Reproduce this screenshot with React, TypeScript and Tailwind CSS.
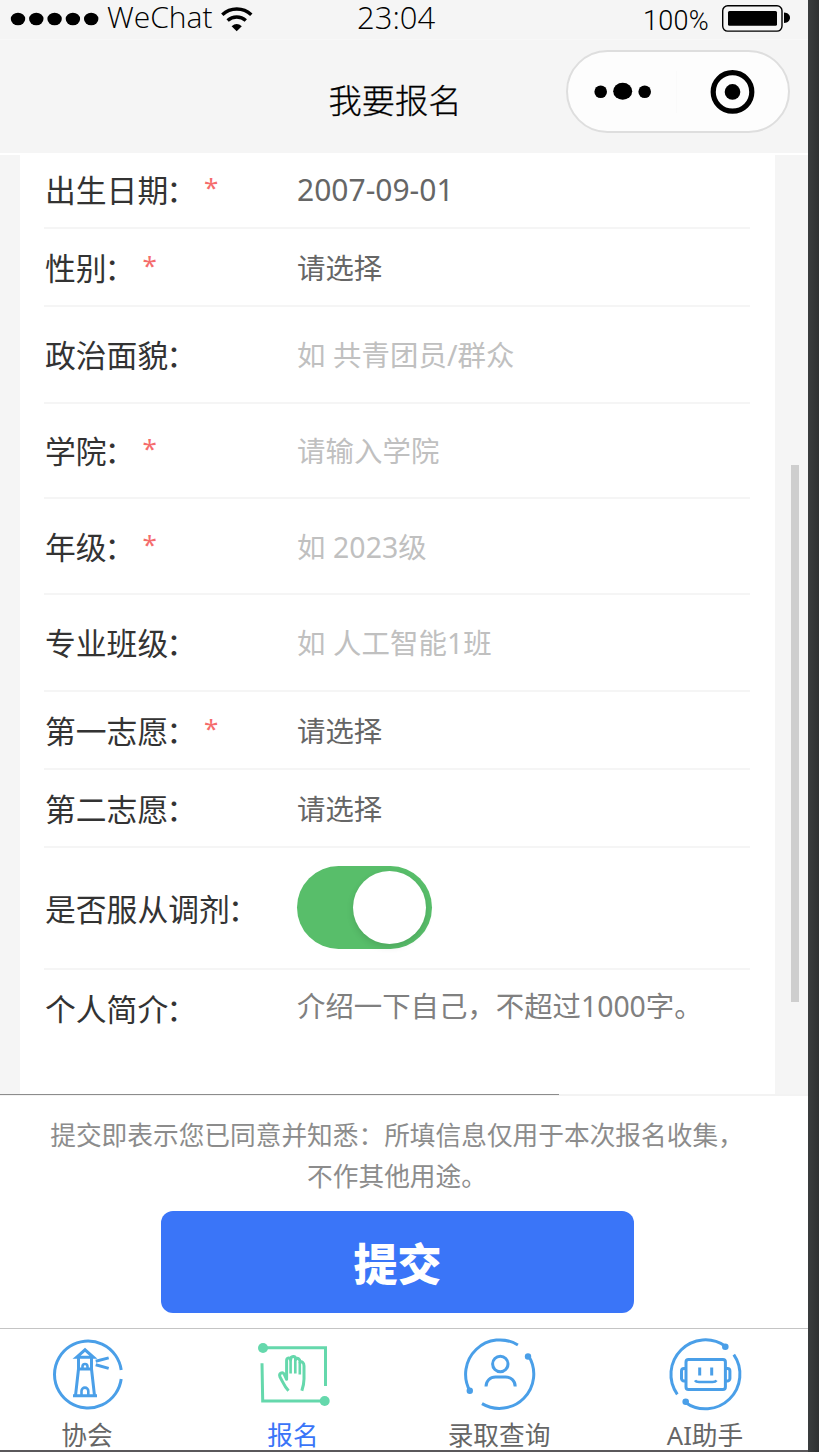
import { useState } from "react";
import type { ReactNode } from "react";

type Field = {
  label: string;
  required?: boolean;
  value: string;
  placeholder?: boolean;
  height: string;
};

const fields: Field[] = [
  { label: "出生日期", required: true, value: "2007-09-01", height: "h-[74px] pb-[3px]" },
  { label: "性别", required: true, value: "请选择", height: "h-[78px]" },
  { label: "政治面貌", value: "如 共青团员/群众", placeholder: true, height: "h-[97px]" },
  { label: "学院", required: true, value: "请输入学院", placeholder: true, height: "h-[95px]" },
  { label: "年级", required: true, value: "如 2023级", placeholder: true, height: "h-24" },
  { label: "专业班级", value: "如 人工智能1班", placeholder: true, height: "h-[97px]" },
  { label: "第一志愿", required: true, value: "请选择", height: "h-[78px]" },
  { label: "第二志愿", value: "请选择", height: "h-[78px]" },
];

function StatusBar() {
  return (
    <div className="relative flex h-10 items-start border-b border-[#f8f8f8] font-['Open_Sans'] font-light text-black">
      <svg width="90" height="38" viewBox="0 0 90 38" className="ml-[10px]">
        {[8, 26.3, 44.6, 62.9, 81.2].map((x) => (
          <ellipse key={x} cx={x} cy="19" rx="7.2" ry="6.3" />
        ))}
      </svg>
      <span className="ml-[7px] w-[106px] whitespace-nowrap text-[30px] leading-[34px]">WeChat</span>
      <svg width="34" height="34" viewBox="0 0 34 34" className="ml-[7px]" fill="none" stroke="#000">
        <path d="M2.3 14.8a21 21 0 0 1 29 0" strokeWidth="3.4" />
        <path d="M7.6 20.6a13.5 13.5 0 0 1 18.2 0" strokeWidth="3.4" />
        <path d="M11.6 26.3q5.1-4.8 10.2 0l-5.1 5z" fill="#000" stroke="none" />
      </svg>
      <span className="absolute left-[357px] top-0 text-[31px] leading-[35px]">23:04</span>
      <div className="ml-auto mr-[18px] flex">
        <span className="mr-[13px] pt-px font-[Roboto] text-[27px] leading-10 tracking-[0.3px]">100%</span>
        <svg width="68" height="36" viewBox="0 0 68 36">
          <rect x="0.7" y="5.7" width="59.3" height="25.4" rx="5" fill="none" stroke="#000" strokeWidth="1.4" />
          <rect x="6" y="11" width="49" height="14.7" rx="1.5" />
          <path d="M62 12.6c8 .4 8 10 0 10.4z" />
        </svg>
      </div>
    </div>
  );
}

function NavBar() {
  return (
    <div className="relative h-[113px]">
      <h1 className="pt-[35px] pr-[18px] text-center font-['Noto_Sans_CJK_SC'] text-[33.3px] font-light leading-[48px] text-black [-webkit-text-stroke:0.3px_#000]">
        我要报名
      </h1>
      <div className="absolute left-[566px] top-[10px] h-[83px] w-[224px] rounded-full border-2 border-[#dedede] bg-[#fdfdfd]">
        <svg width="220" height="79" viewBox="0 0 220 79">
          <circle cx="32.7" cy="39.7" r="6.3" />
          <ellipse cx="54.7" cy="39.2" rx="9.5" ry="8.5" />
          <circle cx="76.7" cy="39.7" r="6.3" />
          <path d="M108.5 19v42" stroke="#fafafa" />
          <circle cx="164.5" cy="39.9" r="19.3" fill="none" stroke="#000" strokeWidth="5.2" />
          <circle cx="164.5" cy="39.9" r="7.8" />
        </svg>
      </div>
    </div>
  );
}

function FieldLabel({ label, required }: { label: string; required?: boolean }) {
  return (
    <div className="flex w-[253px] shrink-0 whitespace-nowrap pl-px pt-px text-[30.8px] leading-10 text-[#333]">
      <span>
        {label}
        <span className="-ml-[2px]">：</span>
      </span>
      {required && <span className="ml-[7px] -mt-[3px] text-[26px] text-[#f56c6c]">*</span>}
    </div>
  );
}

function FieldRow({ field }: { field: Field }) {
  const isDate = field.value.startsWith("2007");
  return (
    <div className={`flex items-center border-b-2 border-[#f5f5f5] ${field.height}`}>
      <FieldLabel label={field.label} required={field.required} />
      <span
        className={`whitespace-nowrap leading-10 ${isDate ? "text-[30px]" : "pt-px text-[28.4px]"} ${
          field.placeholder ? "tracking-[0.1px] text-[#c0c0c0]" : "text-[#666]"
        }`}
      >
        {field.value}
      </span>
    </div>
  );
}

function LighthouseIcon() {
  return (
    <svg width="80" height="80" viewBox="0 0 80 80" fill="none" stroke="#4a9fe8" strokeWidth="3">
      <path d="M74.2 36A33.5 33.5 0 1 0 74.2 45" />
      <path d="M29.5 23.3 38 15.8l8.5 7.5z" />
      <path d="M31.5 23.3V35h13V23.3M31.5 35l-3 26.7M44.5 35l3 26.7M26 61.7h24" />
      <path d="M35.5 35v-2.5a2.5 2.5 0 0 1 5 0V35M34.5 61V57a3.4 3.4 0 0 1 6.8 0v4" strokeWidth="2.6" />
      <path d="M48.7 27.2l13-3.3M48.7 30.8l13 3.6" />
    </svg>
  );
}

function HandIcon() {
  return (
    <svg width="80" height="80" viewBox="0 0 80 80" fill="none" stroke="#65d8ac" strokeWidth="3">
      <path d="M10 13.7h62.5V52M71.7 67H9.7L9 29.3" />
      <circle cx="10" cy="14" r="5" fill="#65d8ac" stroke="none" />
      <circle cx="71.7" cy="67" r="5" fill="#65d8ac" stroke="none" />
      <path
        d="M35.5 56.8C31 52 30 48 27 43c-1.500-4 2.500-5.500 4.300-2.700l2.300 5V26.700c0-3.500 4-3.500 4-.8 0-4.500 5-4.500 5.200-.5 1.200-2 4.300-1 4.300 3 1.700-1.400 3.900 0 3.900 3.500V45c0 5-1 8-2.200 11.800"
        strokeLinejoin="round"
      />
      <path d="M37.6 26v13.5M42.3 25v14.5M46.8 28v12.5" strokeWidth="2.6" />
    </svg>
  );
}

function PersonIcon() {
  return (
    <svg width="80" height="80" viewBox="0 0 80 80" fill="none" stroke="#4a9fe8" strokeWidth="3">
      <path d="M11 57A34.3 34.3 0 0 1 58.9 11M69.800 22.300A34.300 34.300 0 0 1 23 69.600" />
      <circle cx="10.8" cy="56.7" r="3.2" fill="#4a9fe8" stroke="none" />
      <circle cx="69" cy="22.5" r="3.2" fill="#4a9fe8" stroke="none" />
      <circle cx="41.3" cy="30" r="7.7" />
      <path d="M27 52.5c0-5.500 4-9.500 9.500-9.500h10c5.500 0 9.700 4 9.700 9.500" />
    </svg>
  );
}

function RobotIcon() {
  return (
    <svg width="80" height="80" viewBox="0 0 80 80" fill="none" stroke="#4a9fe8" strokeWidth="3">
      <path d="M12.3 60.3A34.5 34.5 0 0 1 60.4 12.2M68.800 20.700A34.500 34.500 0 0 1 20.100 68.200" />
      <circle cx="60.3" cy="12.8" r="3.3" fill="#4a9fe8" stroke="none" />
      <circle cx="20.7" cy="67.8" r="3.3" fill="#4a9fe8" stroke="none" />
      <rect x="21" y="25.4" width="39.4" height="30" rx="2.5" />
      <path d="M21 34.5h-2a2.5 2.5 0 0 0-2.500 2.500v7.500a2.500 2.500 0 0 0 2.500 2.500h2M60.400 34.500h2a2.500 2.500 0 0 1 2.500 2.500v7.500a2.500 2.500 0 0 1-2.500 2.500h-2" />
      <path d="M34.7 33.5v8M46.7 33.5v8" />
      <path d="M30 46.3q1 1.7 4 1.7h13.5q3 0 4-1.7" strokeWidth="2.6" />
    </svg>
  );
}

const tabs: { name: string; icon: ReactNode }[] = [
  { name: "协会", icon: <LighthouseIcon /> },
  { name: "报名", icon: <HandIcon /> },
  { name: "录取查询", icon: <PersonIcon /> },
  { name: "AI助手", icon: <RobotIcon /> },
];

export default function App() {
  const [agree, setAgree] = useState(true);
  const [active, setActive] = useState(1);

  return (
    <div className="flex h-[1452px] w-[819px] overflow-hidden bg-[#343638] font-['Noto_Sans','Noto_Sans_CJK_SC',sans-serif]">
      <div className="flex w-[808px] flex-col bg-white">
        <header className="h-[153px] bg-[#f5f5f5]">
          <StatusBar />
          <NavBar />
        </header>

        {/* Form */}
        <main className="relative h-[942px] border-t-2 border-white bg-[#f5f5f5] pl-5 pr-[33px]">
          <div className="h-full bg-white pl-6 pr-[25px]">
            {fields.map((field) => (
              <FieldRow key={field.label} field={field} />
            ))}
            <div className="flex h-[122px] items-center border-b-2 border-[#f5f5f5]">
              <FieldLabel label="是否服从调剂" />
              <button
                onClick={() => setAgree(!agree)}
                className={`-mt-px flex h-[83px] w-[135px] items-center rounded-full px-[6px] pb-px ${
                  agree ? "justify-end bg-[#58be6a]" : "justify-start bg-[#dfdfdf]"
                }`}
              >
                <span className="size-[73px] rounded-full bg-white shadow-[0_3px_7px_rgba(0,0,0,0.12)]" />
              </button>
            </div>
            <div className="flex pt-[18px]">
              <FieldLabel label="个人简介" />
              <span className="-mt-[2px] whitespace-nowrap text-[28.4px] leading-10 text-[#808080]">介绍一下自己，不超过1000字。</span>
            </div>
          </div>
          <div className="absolute right-[9px] top-[310px] h-[537px] w-2 bg-[#cecece]" />
          <div className="absolute -bottom-px left-0 h-0.5 w-full bg-[#f3f3f3]" />
          <div className="absolute bottom-0 left-0 h-px w-[559px] bg-[#8c8c8c]" />
        </main>

        {/* Submit */}
        <section className="flex h-[233px] flex-col items-center pr-[14px] pt-5">
          <p className="whitespace-nowrap text-center text-[25.7px] leading-[41px] text-[#8c8c8c]">
            提交即表示您已同意并知悉：所填信息仅用于本次报名收集，
            <br />
            不作其他用途。
          </p>
          <button className="ml-px mt-[14px] h-[102px] w-[473px] rounded-xl bg-[#3a75f8] pt-[3px] text-[44px] font-black text-white">提交</button>
        </section>

        <nav className="-ml-4 grid h-[122px] w-[824px] grid-cols-4 border-t border-[#c4c4c4] bg-white">
          {tabs.map((tab, i) => (
            <button key={tab.name} onClick={() => setActive(i)} className="flex flex-col items-center pt-[5px]">
              {tab.icon}
              <span className={`text-[25.7px] leading-[44px] ${active === i ? "text-[#3a75f8]" : "text-[#666]"}`}>{tab.name}</span>
            </button>
          ))}
        </nav>
        <div className="h-0.5 bg-[#5a585b]" />
      </div>
      <div className="z-10 w-[11px] bg-linear-to-r from-[#3a3d3e] to-[#2f3132]" />
    </div>
  );
}
